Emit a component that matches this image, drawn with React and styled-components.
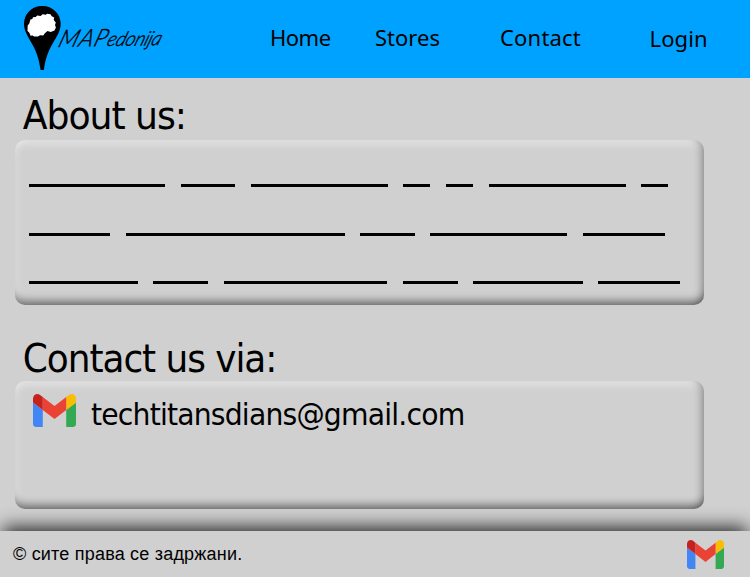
import React from "react";
import styled, { createGlobalStyle } from "styled-components";

const GlobalStyle = createGlobalStyle`
  *, *::before, *::after { box-sizing: border-box; }
  body { margin: 0; background: #d0d0d0; overflow: hidden; }
`;

const Page = styled.div`
  display: flex;
  flex-direction: column;
  width: 750px;
  height: 577px;
  background: #d0d0d0;
  color: #000;
  font-family: "DejaVu Sans Condensed", "DejaVu Sans", sans-serif;
  font-stretch: condensed;
`;

const Header = styled.header`
  display: flex;
  flex: 0 0 78px;
  background: #00a2ff;
`;

const Brand = styled.div`
  display: flex;
  flex: 0 0 270px;
  padding: 5px 0 0 23px;
`;

const Pin = styled.svg`
  flex: none;
  width: 39px;
  height: 66px;
`;

const Wordmark = styled.span`
  height: 30px;
  margin: 18px 0 0 -7px;
  font: italic 300 20px/30px Lato, sans-serif;
  letter-spacing: -0.4px;
  white-space: nowrap;
  -webkit-text-stroke: 0.4px #000;
  transform: rotate(-1deg) skewX(-20deg) scaleX(0.96);
  transform-origin: 0 100%;
`;

const Capitals = styled.span`
  font-size: 24px;
  letter-spacing: 1px;
`;

const Nav = styled.nav`
  display: flex;
  flex: 1;
`;

const NavLink = styled.a`
  flex: 0 0 ${(p) => p.$slot}px;
  padding-top: ${(p) => p.$top || 22}px;
  font: 400 22px/30px "Noto Sans", sans-serif;
  letter-spacing: ${(p) => p.$track}px;
  white-space: nowrap;
`;

const Main = styled.main`
  display: flex;
  flex-direction: column;
  flex: 0 0 453px;
  padding: 0 46px 0 15px;
`;

const Heading = styled.h1`
  flex: 0 0 ${(p) => p.$height}px;
  margin: 0;
  padding: ${(p) => p.$top}px 0 0 7.5px;
  font-size: 38.5px;
  font-weight: 400;
  line-height: 44px;
  letter-spacing: -1px;
  white-space: nowrap;
  transform: scaleX(${(p) => p.$stretch});
  transform-origin: 0 0;
`;

const Panel = styled.section`
  flex: 0 0 ${(p) => p.$height}px;
  border-radius: 10px;
  box-shadow:
    inset 0 -11px 9px -7px rgba(0, 0, 0, 0.47),
    inset -9px 0 8px -7px rgba(0, 0, 0, 0.34),
    inset 0 10px 9px -6px rgba(255, 255, 255, 0.42),
    inset 9px 0 8px -7px rgba(255, 255, 255, 0.25);
`;

const Lines = styled(Panel)`
  display: flex;
  flex-direction: column;
  gap: 46px;
  padding: 44px 0 0 13.5px;
`;

const Line = styled.div`
  display: flex;
  gap: 15.6px;
  height: 3px;
  margin-bottom: ${(p) => p.$shift || 0}px;
`;

const Dash = styled.span`
  width: ${(p) => p.$units * 27.32}px;
  height: 3px;
  background: #000;
`;

const ContactPanel = styled(Panel)`
  display: flex;
  align-items: flex-start;
  padding: 13px 0 0 18px;
`;

const Email = styled.span`
  margin: 0 0 0 15px;
  font-size: 31px;
  line-height: 40px;
  letter-spacing: -0.8px;
  transform: scaleX(1.013);
  transform-origin: 0 0;
`;

const MailIcon = styled.svg`
  flex: none;
  width: ${(p) => p.$w}px;
  height: ${(p) => p.$h}px;
`;

const Footer = styled.footer`
  display: flex;
  flex: 0 0 46px;
  justify-content: space-between;
  padding: 9px 26px 0 13px;
  background: #d0d0d0;
  box-shadow: 0 -7px 18px -3px rgba(0, 0, 0, 0.8);
`;

const Copyright = styled.span`
  font: 400 18px/28px "Liberation Sans", sans-serif;
  letter-spacing: 0.2px;
`;

function Gmail({ w, h }) {
  return (
    <MailIcon $w={w} $h={h} viewBox="52 42 88 66" preserveAspectRatio="none">
      <path fill="#4285f4" d="M58 108h14V74L52 59v43c0 3.3 2.7 6 6 6" />
      <path fill="#34a853" d="M120 108h14c3.3 0 6-2.7 6-6V59l-20 15" />
      <path fill="#fbbc04" d="M120 48v26l20-15v-8c0-7.4-8.5-11.6-14.4-7.2" />
      <path fill="#ea4335" d="M72 74V48l24 18 24-18v26L96 92" />
      <path fill="#c5221f" d="M52 51v8l20 15V48l-5.6-4.2C60.5 39.4 52 43.6 52 51" />
    </MailIcon>
  );
}

const LINES = [
  [5, 2, 5, 1, 1, 5, 1],
  [3, 8, 2, 5, 3],
  [4, 2, 6, 2, 4, 3],
];

export default function App() {
  return (
    <Page>
      <GlobalStyle />
      <Header>
        <Brand>
          <Pin viewBox="0 0 39 66">
            <path d="M19.2 1C8.8 1 1 8.8 1 18.8c0 7.2 4.2 13.2 7.8 19.6 5.2 9 7.4 17 8.8 26.6h3.3c1.2-9.8 3.6-17.8 8.8-26.6 3.8-6.4 8-12.2 8-19.6C37.7 8.8 29.7 1 19.2 1z" />
            <path
              fill="#fff"
              d="M7.4 14.5l2-.5.5-1.7 2.8-.3 1.5-1.6 3.4.5 2-1.6 3.3.4 1.2-1 3.4.6 1.2 2 2.5 1.3-.5 2.5 2.1 2.4-.8 2.6.9 2.5-1.4 3-3.8 1.3-3.2-.8-2.6 2.1-1.7 2.2-3.2-.1-1.9 1.1-4.1.1-1.2-1-2.2.2-1.4-3.1-1.7-1.5.2-5.5 1.6-2z"
            />
          </Pin>
          <Wordmark><Capitals>MAP</Capitals>edonija</Wordmark>
        </Brand>
        <Nav>
          <NavLink $slot={105} $track={-0.5}>Home</NavLink>
          <NavLink $slot={125} $track={0}>Stores</NavLink>
          <NavLink $slot={149.5} $track={0.2}>Contact</NavLink>
          <NavLink $slot={80} $track={0.1} $top={23}>Login</NavLink>
        </Nav>
      </Header>
      <Main>
        <Heading $height={62} $top={16} $stretch={1.045}>About us:</Heading>
        <Lines $height={165}>
          {LINES.map((units, i) => (
            <Line key={i} $shift={i === 1 ? -1 : 0}>
              {units.map((n, j) => (
                <Dash key={j} $units={n} />
              ))}
            </Line>
          ))}
        </Lines>
        <Heading $height={76} $top={32} $stretch={1.036}>Contact us via:</Heading>
        <ContactPanel $height={128}>
          <Gmail w={43} h={33} />
          <Email>techtitansdians@gmail.com</Email>
        </ContactPanel>
      </Main>
      <Footer>
        <Copyright>© сите права се задржани.</Copyright>
        <Gmail w={37} h={29} />
      </Footer>
    </Page>
  );
}
